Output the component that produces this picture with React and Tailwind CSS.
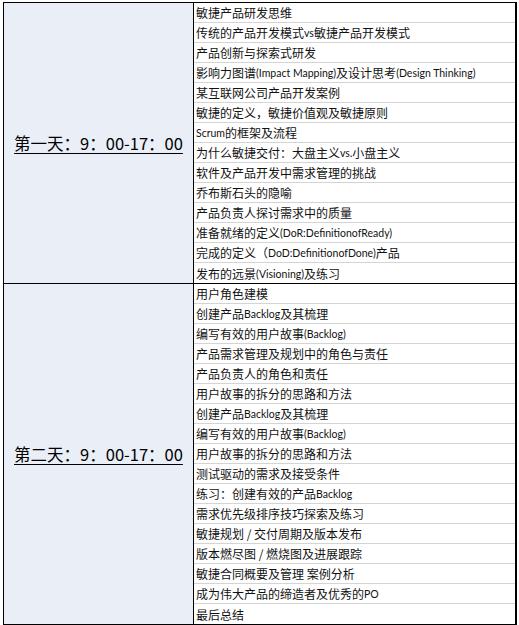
import React from 'react';

const dayOne = [
    '敏捷产品研发思维',
    '传统的产品开发模式vs敏捷产品开发模式',
    '产品创新与探索式研发',
    '影响力图谱(Impact Mapping)及设计思考(Design Thinking)',
    '某互联网公司产品开发案例',
    '敏捷的定义，敏捷价值观及敏捷原则',
    'Scrum的框架及流程',
    '为什么敏捷交付：大盘主义vs.小盘主义',
    '软件及产品开发中需求管理的挑战',
    '乔布斯石头的隐喻',
    '产品负责人探讨需求中的质量',
    '准备就绪的定义(DoR:DefinitionofReady)',
    '完成的定义（DoD:DefinitionofDone)产品',
    '发布的远景(Visioning)及练习',
];

const dayTwo = [
    '用户角色建模',
    '创建产品Backlog及其梳理',
    '编写有效的用户故事(Backlog)',
    '产品需求管理及规划中的角色与责任',
    '产品负责人的角色和责任',
    '用户故事的拆分的思路和方法',
    '创建产品Backlog及其梳理',
    '编写有效的用户故事(Backlog)',
    '用户故事的拆分的思路和方法',
    '测试驱动的需求及接受条件',
    '练习：创建有效的产品Backlog',
    '需求优先级排序技巧探索及练习',
    '敏捷规划 / 交付周期及版本发布',
    '版本燃尽图 / 燃烧图及进展跟踪',
    '敏捷合同概要及管理 案例分析',
    '成为伟大产品的缔造者及优秀的PO',
    '最后总结',
];

// latin runs are set smaller, like the Calibri bits in the sheet
const Mixed = ({ text }) => {
    const parts = text.split(/(\(?[A-Za-z][A-Za-z0-9 .:]*\)?)/g);
    return parts.map((p, i) =>
        /^\(?[A-Za-z]/.test(p) ? (
            <span key={i} className="text-[10.5px] font-['Lato',sans-serif]">{p}</span>
        ) : (
            <span key={i}>{p}</span>
        )
    );
};

const DayBlock = ({ label, items, last }) => (
    <div className={`flex ${last ? '' : 'border-b border-black'}`}>
        <div className="w-[189px] shrink-0 bg-[#e9eef7] flex items-center justify-center">
            <span className="text-[16.5px] underline underline-offset-[3px] decoration-1 text-black">{label}</span>
        </div>
        <div className="flex-1 border-l border-black">
            {items.map((item, idx) => (
                <div
                    key={`row-${idx}`}
                    className={`h-[20px] flex items-end pl-[2px] pb-[1px] text-[12px] leading-[16px] text-[#111] whitespace-nowrap ${idx === items.length - 1 ? '' : 'border-b border-[#d4d4d4]'}`}
                >
                    <Mixed text={item} />
                </div>
            ))}
        </div>
    </div>
);

const App = () => {
    return (
        <div className="w-[519px] h-[625px] bg-white pt-[2px] pl-[3px] font-['Noto_Sans_CJK_SC','Noto_Sans',sans-serif]">
            <div className="w-[514px] border-t border-l border-r-2 border-b-2 border-black">
                <DayBlock label="第一天：9：00-17：00" items={dayOne} />
                <DayBlock label="第二天：9：00-17：00" items={dayTwo} last />
            </div>
        </div>
    );
};

export default App;
